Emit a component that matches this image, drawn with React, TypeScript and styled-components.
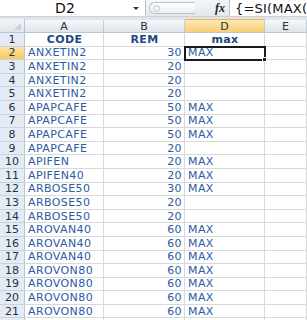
import styled, { createGlobalStyle } from 'styled-components'

const Global = createGlobalStyle`
	html, body {
		margin: 0;
		padding: 0;
		background: #fff;
		overflow: hidden;
	}
	body {
		font-family: "DejaVu Sans", sans-serif;
	}
`

const rows: [string, string, string][] = [
	['ANXETIN2', '30', 'MAX'],
	['ANXETIN2', '20', ''],
	['ANXETIN2', '20', ''],
	['ANXETIN2', '20', ''],
	['APAPCAFE', '50', 'MAX'],
	['APAPCAFE', '50', 'MAX'],
	['APAPCAFE', '50', 'MAX'],
	['APAPCAFE', '20', ''],
	['APIFEN', '20', 'MAX'],
	['APIFEN40', '20', 'MAX'],
	['ARBOSE50', '30', 'MAX'],
	['ARBOSE50', '20', ''],
	['ARBOSE50', '20', ''],
	['AROVAN40', '60', 'MAX'],
	['AROVAN40', '60', 'MAX'],
	['AROVAN40', '60', 'MAX'],
	['AROVON80', '60', 'MAX'],
	['AROVON80', '60', 'MAX'],
	['AROVON80', '60', 'MAX'],
	['AROVON80', '60', 'MAX'],
	['', '', ''],
]

const Window = styled.div`
	width: 307px;
	height: 320px;
	overflow: hidden;
	background: #fff;
`

const FormulaBar = styled.div`
	display: grid;
	grid-template-columns: 145px 84px 1fr;
	height: 16px;
	border-bottom: 1px solid #c9d1db;
`

const NameBox = styled.div`
	display: flex;
	align-items: center;
	background: #fff;
	font-size: 14px;
	color: #111;
	position: relative;
	padding-left: 55px;
	letter-spacing: 0.3px;
`

const Arrow = styled.span`
	position: absolute;
	right: 6px;
	top: 7px;
	width: 0;
	height: 0;
	border-left: 3px solid transparent;
	border-right: 3px solid transparent;
	border-top: 3px solid #333;
`

const Tools = styled.div`
	display: flex;
	align-items: center;
	justify-content: space-between;
	background: linear-gradient(#f4f6f9, #e3e8ee);
	padding: 0 4px 0 3px;
	border-left: 1px solid #b9c3cf;
`

const Pill = styled.div`
	width: 46px;
	height: 12px;
	border: 1px solid #b8c0ca;
	border-right: none;
	border-radius: 7px 0 0 7px;
	background: linear-gradient(#ffffff, #e9edf2);
	display: flex;
	align-items: center;
	padding-left: 3px;
	box-sizing: border-box;
`

const Dot = styled.div`
	width: 7px;
	height: 7px;
	border-radius: 50%;
	border: 1px solid #c3c9d1;
	background: #eef1f4;
	box-sizing: border-box;
`

const Fx = styled.span`
	font-family: "Liberation Serif", serif;
	font-style: italic;
	font-weight: bold;
	font-size: 12px;
	color: #222;
`

const Formula = styled.div`
	display: flex;
	align-items: center;
	border-left: 1px solid #b9c3cf;
	padding-left: 5px;
	font-size: 13px;
	color: #111;
	white-space: nowrap;
	overflow: hidden;
	letter-spacing: 0.2px;
`

const Gap = styled.div`
	height: 2px;
	background: #dfe4ea;
`

const Sheet = styled.div`
	display: grid;
	grid-template-columns: 25px 79px 81px 80px 1fr;
	grid-template-rows: 14px;
	grid-auto-rows: 13.6px;
`

const Corner = styled.div`
	background: linear-gradient(#f2f5f8, #dfe5ec);
	border-right: 1px solid #b9c5d3;
	border-bottom: 1px solid #b9c5d3;
	position: relative;
	box-sizing: border-box;
	&::after {
		content: '';
		position: absolute;
		right: 3px;
		bottom: 2px;
		border-left: 7px solid transparent;
		border-bottom: 7px solid #c9d0d8;
	}
`

const ColHead = styled.div<{ $active?: boolean }>`
	display: flex;
	align-items: center;
	justify-content: center;
	font-size: 11px;
	color: #27323f;
	box-sizing: border-box;
	border-right: 1px solid #c4ccd6;
	border-bottom: 1px solid #b9c5d3;
	background: ${(p) =>
		p.$active
			? 'linear-gradient(#fde8b4, #f8cf72)'
			: 'linear-gradient(#f6f8fa, #dfe4ea)'};
	border-top: ${(p) => (p.$active ? '1px solid #f2b545' : '1px solid transparent')};
`

const RowHead = styled.div<{ $active?: boolean }>`
	display: flex;
	align-items: center;
	justify-content: center;
	font-size: 11px;
	color: #27323f;
	box-sizing: border-box;
	border-right: 1px solid #b9c5d3;
	border-bottom: 1px solid #c9d3df;
	background: ${(p) =>
		p.$active ? 'linear-gradient(#fde3a6, #f6c95f)' : '#e4ebf4'};
`

const Cell = styled.div<{ $align?: string; $bold?: boolean; $active?: boolean }>`
	position: relative;
	display: flex;
	align-items: center;
	justify-content: ${(p) => p.$align || 'flex-start'};
	padding: 0 2px 0 3px;
	box-sizing: border-box;
	font-size: 11px;
	letter-spacing: 0.4px;
	font-weight: ${(p) => (p.$bold ? 'bold' : 'normal')};
	color: ${(p) => (p.$bold ? '#23487f' : '#2d5aa3')};
	border-right: 1px solid #d9d9d9;
	border-bottom: 1px solid #d9d9d9;
	white-space: nowrap;
	outline: ${(p) => (p.$active ? '2px solid #1a1a1a' : 'none')};
	outline-offset: -1px;
	z-index: ${(p) => (p.$active ? 1 : 0)};
`

const Handle = styled.span`
	position: absolute;
	right: -3px;
	bottom: -3px;
	width: 5px;
	height: 5px;
	background: #1a1a1a;
	border: 1px solid #fff;
	box-sizing: border-box;
`

const App = () => {
	return (
		<Window>
			<Global />
			<FormulaBar>
				<NameBox>
					D2
					<Arrow />
				</NameBox>
				<Tools>
					<Pill>
						<Dot />
					</Pill>
					<Fx>fx</Fx>
				</Tools>
				<Formula>{'{=SI(MAX(B2:B9)=B2;"MAX";"")}'}</Formula>
			</FormulaBar>
			<Gap />
			<Sheet>
				<Corner />
				<ColHead>A</ColHead>
				<ColHead>B</ColHead>
				<ColHead $active>D</ColHead>
				<ColHead>E</ColHead>

				<RowHead>1</RowHead>
				<Cell $align="center" $bold>CODE</Cell>
				<Cell $align="center" $bold>REM</Cell>
				<Cell $align="center" $bold>max</Cell>
				<Cell />

				{rows.map((r, i) => {
					const n = i + 2
					return (
						<>
							<RowHead $active={n === 2}>{n}</RowHead>
							<Cell>{r[0]}</Cell>
							<Cell $align="flex-end">{r[1]}</Cell>
							<Cell $active={n === 2}>
								{r[2]}
								{n === 2 && <Handle />}
							</Cell>
							<Cell />
						</>
					)
				})}
			</Sheet>
		</Window>
	)
}

export default App
